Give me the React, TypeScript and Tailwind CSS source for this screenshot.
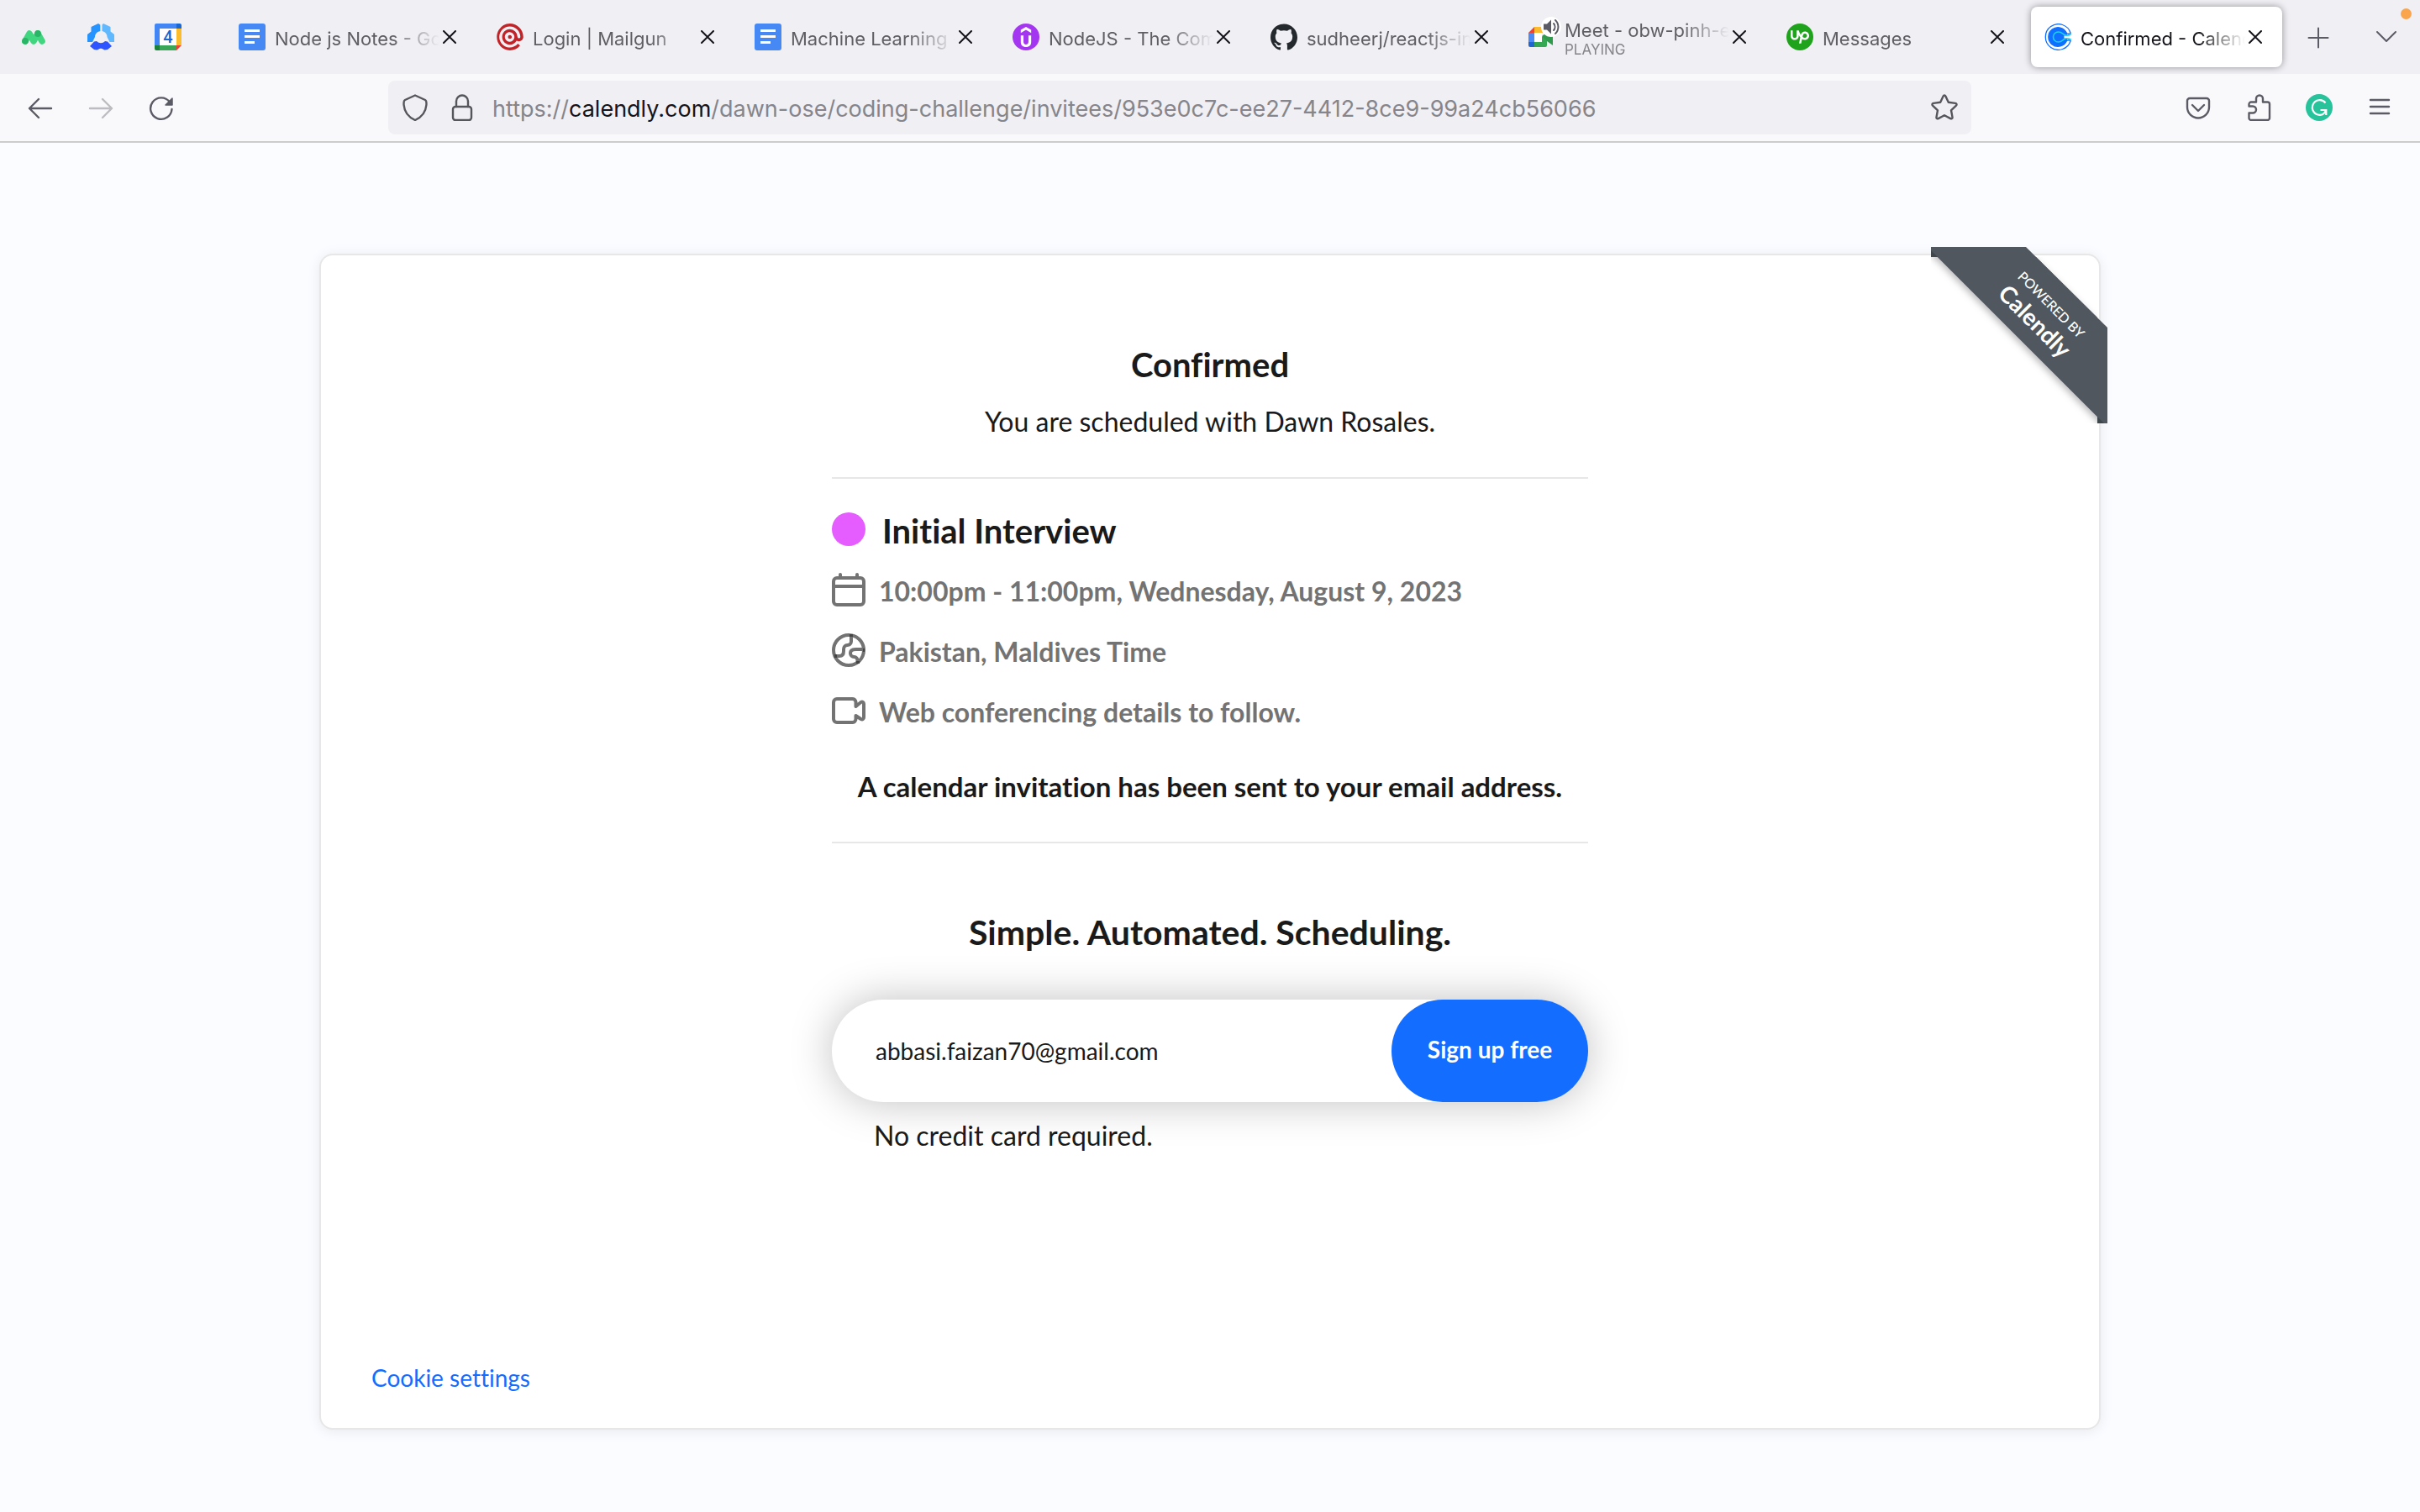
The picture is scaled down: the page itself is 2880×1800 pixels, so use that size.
import type { ReactNode } from "react";
import { SiGithub, SiMailgun, SiUdemy, SiUpwork } from "react-icons/si";

/* ---------- favicons ---------- */

function MonitorIcon() {
  return (
    <svg viewBox="0 0 28 17" className="w-7" aria-hidden="true">
      <path d="M4 13 9 4 14 13 19 4 24 13" fill="none" stroke="#3fd67f" strokeWidth="7.6" strokeLinecap="round" strokeLinejoin="round" />
      <circle cx="4" cy="12.8" r="3.9" fill="#29b566" />
      <circle cx="19" cy="4" r="3.9" fill="#29b566" />
    </svg>
  );
}

function HubIcon() {
  return (
    <svg viewBox="0 0 32 32" className="size-8" aria-hidden="true">
      <path d="M13 0 15.300 1.500V9C11 10 9 13 9 16l-3 6H0v-9l4.500-3.500V4z" fill="#2694ff" />
      <path d="M19 0 17.500 1.500V9c4 1 6 4 6 7l3 6H32v-9l-4.500-3.500V4z" fill="#60b9ff" />
      <path d="M3 27 8 21.500l3-.5c3 3 7 3 10 0l3 .5 5 5.500-5 4-3.500.5L17 29.800h-2L11.500 31.500 8 31z" fill="#2d54ff" />
    </svg>
  );
}

function GoogleCalendarIcon() {
  return (
    <span className="relative block size-8">
      <svg viewBox="0 0 32 32" className="size-8" aria-hidden="true">
        <path d="M2 0h24v6H6v20H0V2a2 2 0 0 1 2-2z" fill="#4285f4" />
        <path d="M26 0h4a2 2 0 0 1 2 2v4h-6z" fill="#1967d2" />
        <path d="M26 6h6v20h-6z" fill="#fbbc2c" />
        <path d="M6 26h20v6H6z" fill="#3aa757" />
        <path d="M0 26h6v6H2a2 2 0 0 1-2-2z" fill="#1a8039" />
        <path d="M26 26h6l-6 6z" fill="#ea4335" />
        <path d="M6 6h20v20H6z" fill="#fff" />
      </svg>
      <span className="absolute inset-0 flex items-center justify-center font-['Roboto',sans-serif] text-[20px] leading-none font-medium text-[#1967d2]">4</span>
    </span>
  );
}

function DocsIcon() {
  return (
    <svg viewBox="0 0 32 32" className="size-8" aria-hidden="true">
      <rect width="32" height="32" rx="3" fill="#4688f4" />
      <path d="M7 7h18v3H7zM7 14h18v3H7zM7 21h12v3H7z" fill="#fff" />
    </svg>
  );
}

function UdemyIcon() {
  return (
    <span className="flex size-8 items-center justify-center rounded-full bg-[#a435f0] text-white">
      <SiUdemy className="size-6" aria-hidden="true" />
    </span>
  );
}

function UpworkIcon() {
  return (
    <span className="flex size-8 items-center justify-center rounded-full bg-[#1fa31c] text-white">
      <SiUpwork className="size-[22px]" aria-hidden="true" />
    </span>
  );
}

function MeetIcon() {
  return (
    <svg viewBox="0 0 32 32" className="size-8 overflow-visible" aria-hidden="true">
      <path d="M0 11 7 4v7z" fill="#ea4335" />
      <path d="M7 4h13a2 2 0 0 1 2 2v5H7z" fill="#fbb92e" />
      <path d="M0 11h7v11H0z" fill="#4c8bf5" />
      <path d="M0 22h7v6H2a2 2 0 0 1-2-2z" fill="#1f66d0" />
      <path d="M7 22h9V16l6-6v16a2 2 0 0 1-2 2H7z" fill="#34a853" />
      <path d="m16 15 7-5 6-4v20l-7-5z" fill="#2f9a4b" />
      <path d="M7 11h9v11H7z" fill="#fff" />
      <circle cx="27" cy="4" r="12" fill="#fff" />
      <path d="M18 0.500h4l5-5v17l-5-5h-4z" fill="#5b5b66" />
      <path d="M30 0a6 6 0 0 1 0 8M32-4a11 11 0 0 1 0 16" fill="none" stroke="#5b5b66" strokeWidth="2" strokeLinecap="round" />
    </svg>
  );
}

function CalendlyIcon() {
  return (
    <svg viewBox="0 0 32 32" className="size-8" aria-hidden="true">
      <path d="M31.200 11.500A15.300 15.300 0 1 0 31.200 20.500C29.800 19.600 28 19.500 26.500 20.500A11.300 11.300 0 1 1 26.500 11.500C28 12.500 29.800 12.400 31.200 11.500z" fill="#fff" stroke="#0f6fff" strokeWidth="1.300" strokeLinejoin="round" />
      <circle cx="16.300" cy="16" r="11.300" fill="#0f6fff" />
      <path d="M23.500 14.500 28 14v4l-4.500-.5z" fill="#fff" />
      <path d="M31.200 13c-2.500 1.500-6.200 1.300-8.200 0C21 11.500 20 10 16.500 10a6 6 0 0 0 0 12c3.500 0 4.500-1.500 6.500-3s5.700-1.500 8.200 0" fill="none" stroke="#1fd0f0" strokeWidth="1.600" strokeLinecap="round" />
    </svg>
  );
}

/* ---------- line icons ---------- */

function Stroke({ children, className, width = 2.4 }: { children: ReactNode; className: string; width?: number }) {
  return (
    <svg viewBox="0 0 32 32" className={className} fill="none" stroke="currentColor" strokeWidth={width} strokeLinecap="round" strokeLinejoin="round" aria-hidden="true">
      {children}
    </svg>
  );
}

type Tab = { title: string; icon: ReactNode; note?: string; active?: boolean };

const tabs: Tab[] = [
  { title: "Node js Notes - Go", icon: <DocsIcon /> },
  { title: "Login | Mailgun", icon: <SiMailgun className="size-8 text-[#c02428]" aria-hidden="true" /> },
  { title: "Machine Learning -", icon: <DocsIcon /> },
  { title: "NodeJS - The Com", icon: <UdemyIcon /> },
  { title: "sudheerj/reactjs-in", icon: <SiGithub className="size-8 text-[#24292e]" aria-hidden="true" /> },
  { title: "Meet - obw-pinh-e", icon: <MeetIcon />, note: "PLAYING" },
  { title: "Messages", icon: <UpworkIcon /> },
  { title: "Confirmed - Calend", icon: <CalendlyIcon />, active: true },
];

function BrowserTab({ tab }: { tab: Tab }) {
  return (
    <div className="w-[307px] min-w-0 px-1 py-2">
      <div
        className={
          tab.active
            ? "flex h-[72px] items-center rounded-lg bg-white pr-6 pl-4 text-[#15141a] shadow-[0_0_8px_rgba(0,0,0,0.4)]"
            : "flex h-[72px] items-center pr-6 pl-4 text-[#5f5f63]"
        }
      >
        <button type="button" className="flex min-w-0 flex-1 items-center gap-[11px] text-left">
          <span className="shrink-0">{tab.icon}</span>
          <span className="flex min-w-0 flex-1 flex-col overflow-hidden pt-1 whitespace-nowrap [mask-image:linear-gradient(to_left,transparent,black_56px)]">
            <span className="text-[22px] leading-[26px]">{tab.title}</span>
            {tab.note && <span className="text-[17px] leading-5 text-[#85858a]">{tab.note}</span>}
          </span>
        </button>
        <button type="button" aria-label={`Close ${tab.title}`} className="ml-1 shrink-0 text-[#15141a]">
          <svg viewBox="0 0 16 16" className="size-4" fill="none" stroke="currentColor" strokeWidth="2" strokeLinecap="round" aria-hidden="true">
            <path d="m1 1 14 14M15 1 1 15" />
          </svg>
        </button>
      </div>
    </div>
  );
}

function TabStrip() {
  return (
    <div className="relative flex bg-[#f0eff4]">
      <div className="mr-6 flex">
        <button type="button" aria-label="Monitor" className="flex w-20 items-center justify-center">
          <MonitorIcon />
        </button>
        <button type="button" aria-label="Hub" className="flex w-20 items-center justify-center">
          <HubIcon />
        </button>
        <button type="button" aria-label="Google Calendar" className="flex w-20 items-center justify-center">
          <GoogleCalendarIcon />
        </button>
      </div>
      {tabs.map((tab) => (
        <BrowserTab key={tab.title} tab={tab} />
      ))}
      <button type="button" aria-label="New tab" className="flex w-[78px] items-center justify-center text-[#5b5b66]">
        <Stroke className="size-8" width={2}>
          <path d="M16 5.500v23M4.500 17h23" />
        </Stroke>
      </button>
      <button type="button" aria-label="List all tabs" className="ml-auto flex w-20 items-center justify-center text-[#5b5b66]">
        <Stroke className="size-8" width={2}>
          <path d="m5 10 11 11 11-11" />
        </Stroke>
      </button>
      <span className="absolute top-[10px] right-[10px] size-[13px] rounded-full bg-[#faa54b]" />
    </div>
  );
}

function NavButton({ label, muted, children }: { label: string; muted?: boolean; children: ReactNode }) {
  return (
    <button
      type="button"
      aria-label={label}
      className={muted ? "flex h-20 w-[72px] items-center justify-center text-[#bdbdc1]" : "flex h-20 w-[72px] items-center justify-center text-[#5b5b66]"}
    >
      {children}
    </button>
  );
}

function NavBar() {
  return (
    <div className="flex items-center border-b-2 border-[#cccccc] bg-[#f9f9fb] px-3">
      <NavButton label="Back">
        <Stroke className="size-8">
          <path d="M14 6 3 17l11 11M3 17h26" />
        </Stroke>
      </NavButton>
      <NavButton label="Forward" muted>
        <Stroke className="size-8">
          <path d="m18 6 11 11-11 11M29 17H3" />
        </Stroke>
      </NavButton>
      <NavButton label="Reload">
        <Stroke className="size-8">
          <path d="M28.500 18A12.700 12.700 0 1 1 26 9.500" />
          <path d="M29 5v8h-8z" fill="currentColor" strokeWidth="1.500" />
        </Stroke>
      </NavButton>

      <div className="mx-[234px] flex h-16 min-w-0 flex-1 items-center rounded-lg bg-[#f0eff4] px-4 text-[#55555c]">
        <button type="button" aria-label="Tracking protection">
          <Stroke className="size-8">
            <path d="M16 1.500 28 7c1.500.7 1.600 3.500 1.400 6-.6 7-4.400 14-13.400 18C7 27 3.200 20 2.600 13 2.400 10.500 2.500 7.700 4 7z" />
          </Stroke>
        </button>
        <button type="button" aria-label="Connection secure" className="ml-6">
          <Stroke className="size-8">
            <rect x="5" y="15" width="22" height="16" rx="3" />
            <path d="M9 15V8.500a7 7 0 0 1 14 0V15" />
          </Stroke>
        </button>
        <div role="textbox" aria-label="Address" className="ml-5 min-w-0 flex-1 overflow-hidden pt-1 text-[27px] leading-9 whitespace-nowrap text-[#85858b]">
          https://<span className="text-[#15141a]">calendly.com</span>/dawn-ose/coding-challenge/invitees/953e0c7c-ee27-4412-8ce9-99a24cb56066
        </div>
        <button type="button" aria-label="Bookmark this page">
          <Stroke className="size-8">
            <path d="M14.600 2.500c.6-1.300 2.200-1.300 2.800 0l3.400 7.300 8.200 1.100c1.500.2 2 1.800 1 2.800l-6 5.600 1.500 8.100c.3 1.500-1 2.400-2.300 1.700L16 25.300l-7.200 3.800c-1.300.7-2.600-.2-2.300-1.700L8 19.300l-6-5.600c-1-1-.5-2.600 1-2.800l8.200-1.100z" />
          </Stroke>
        </button>
      </div>

      <NavButton label="Save to Pocket">
        <Stroke className="size-8">
          <path d="M6 5h20a3 3 0 0 1 3 3v7.500a13 13 0 0 1-26 0V8a3 3 0 0 1 3-3zM9 13l7 7 7-7" />
        </Stroke>
      </NavButton>
      <NavButton label="Extensions">
        <Stroke className="size-8">
          <path d="M13 9.500V5.500a4 4 0 0 1 8 0v4h5.500a2.500 2.500 0 0 1 2.500 2.500v16.500a2.500 2.500 0 0 1-2.500 2.500h-19.500A2.500 2.500 0 0 1 4.500 28.500v-6h4.500a4 4 0 0 0 0-8H4.500V12A2.500 2.500 0 0 1 7 9.500z" />
        </Stroke>
      </NavButton>
      <NavButton label="Grammarly">
        <svg viewBox="0 0 32 32" className="size-8" aria-hidden="true">
          <circle cx="16" cy="16" r="16" fill="#27c39b" />
          <path d="M23.500 10.500A8.800 8.800 0 1 0 17 24.800c3.500 0 6-2.500 7-5.800M17.500 19h6.800v6" fill="none" stroke="#fff" strokeWidth="2.200" />
        </svg>
      </NavButton>
      <NavButton label="Open menu">
        <Stroke className="size-8">
          <path d="M5 7h22M5 15h22M5 23h22" />
        </Stroke>
      </NavButton>
    </div>
  );
}

/* ---------- page ---------- */

function PoweredByRibbon() {
  return (
    <a href="#calendly" className="absolute -top-[10px] -right-[10px] block size-[210px] overflow-hidden text-white">
      <svg viewBox="0 0 210 210" className="size-full" aria-hidden="true">
        <defs>
          <filter id="ribbon-shadow" x="-10%" y="-10%" width="120%" height="120%">
            <feDropShadow dx="-1" dy="4" stdDeviation="4" floodColor="#000" floodOpacity="0.28" />
          </filter>
          <clipPath id="ribbon-inside">
            <path d="M0 12h198v198H0z" />
          </clipPath>
        </defs>
        <g clipPath="url(#ribbon-inside)">
          <path d="M0 4 0 0h113l97 96v114h-4z" fill="#50575e" filter="url(#ribbon-shadow)" />
        </g>
        <path d="M0 2v10h10zM198 198v12h10z" fill="#3f464c" />
        <path d="M0 0h113l97 96v114h-4L0 4z" fill="#50575e" />
      </svg>
      <span className="absolute top-[80px] left-[132px] flex -translate-x-1/2 -translate-y-1/2 rotate-45 flex-col items-center whitespace-nowrap">
        <span className="text-[16px] leading-[22px] font-medium">POWERED BY</span>
        <span className="text-[28px] leading-8 font-bold">Calendly</span>
      </span>
    </a>
  );
}

function Detail({ icon, children }: { icon: ReactNode; children: ReactNode }) {
  return (
    <li className="flex h-10 items-center gap-4">
      {icon}
      <span className="pt-1">{children}</span>
    </li>
  );
}

function DetailIcon({ children }: { children: ReactNode }) {
  return (
    <svg viewBox="0 0 40 40" className="size-10 shrink-0" fill="none" stroke="#737373" strokeWidth="4" strokeLinecap="round" strokeLinejoin="round" aria-hidden="true">
      {children}
    </svg>
  );
}

function Confirmation() {
  return (
    <main className="flex flex-1 flex-col bg-[#fbfcff] px-10 pt-[132px] pb-[98px]">
      <div className="relative mx-auto flex w-full max-w-[2120px] flex-1 flex-col rounded-2xl border-2 border-[#e7e7e7] bg-white pt-[106px] pb-[42px] font-['Lato',sans-serif] text-[#1a1a1a] shadow-[0_2px_16px_rgba(0,0,0,0.08)] [font-variant-ligatures:none]">
        <PoweredByRibbon />
        <div className="mx-auto flex w-full max-w-[900px] flex-col">
          <h1 className="text-center text-[40px] leading-[48px] font-bold">Confirmed</h1>
          <p className="mt-6 text-center text-[32px] leading-10">You are scheduled with Dawn Rosales.</p>
          <hr className="mt-[46px] border-t-2 border-[#e7e7e7]" />

          <div className="mt-9 flex h-12 items-center gap-5">
            <span className="size-10 rounded-full bg-[#e55cff]" />
            <h2 className="pt-1 text-[40px] leading-[48px] font-bold">Initial Interview</h2>
          </div>
          <ul className="mt-7 flex flex-col gap-8 text-[32px] leading-10 font-bold text-[#737373]">
            <Detail
              icon={
                <DetailIcon>
                  <rect x="2" y="6" width="36" height="32" rx="4" />
                  <path d="M2 16h36M10 2v4M30 2v4" />
                </DetailIcon>
              }
            >
              10:00pm - 11:00pm, Wednesday, August 9, 2023
            </Detail>
            <Detail
              icon={
                <DetailIcon>
                  <circle cx="20" cy="20" r="18" />
                  <path d="M23 3v6.500c0 3-2 4.500-4.500 4.500S14 16 14 19v2c0 4-2 6-5 6H4M38 19h-9c-5 0-7 1.500-7 4.500s2 4.500 4.500 4.500 4 2 4 4v3" strokeLinecap="butt" />
                  <path d="M23 1v3M3 27h3M37 20h2M31 33v3" stroke="#444" strokeLinecap="butt" />
                </DetailIcon>
              }
            >
              Pakistan, Maldives Time
            </Detail>
            <Detail
              icon={
                <DetailIcon>
                  <path d="M28.500 12V10a4 4 0 0 0-4-4H6a4 4 0 0 0-4 4v20a4 4 0 0 0 4 4h18.500a4 4 0 0 0 4-4v-4l6 4c2 1 3.500 0 3.500-2V12c0-2-1.500-3-3.500-2l-6 5z" />
                </DetailIcon>
              }
            >
              Web conferencing details to follow.
            </Detail>
          </ul>
          <p className="mt-[50px] text-center text-[33px] leading-10 font-bold">A calendar invitation has been sent to your email address.</p>
          <hr className="mt-[46px] border-t-2 border-[#e7e7e7]" />

          <h2 className="mt-[82px] text-center text-[41px] leading-[48px] font-bold">Simple. Automated. Scheduling.</h2>
          <form className="mt-14 flex h-[122px] rounded-full bg-white shadow-[0_0_50px_rgba(0,0,0,0.25)]" onSubmit={(e) => e.preventDefault()}>
            <input
              type="email"
              aria-label="Email address"
              defaultValue="abbasi.faizan70@gmail.com"
              className="min-w-0 flex-1 rounded-l-full bg-transparent pl-[52px] text-[28px] outline-none"
            />
            <button type="submit" className="w-[234px] rounded-full bg-[#136dff] pb-1 text-[28px] font-bold text-white">
              Sign up free
            </button>
          </form>
          <p className="mt-5 pl-[50px] text-[32px] leading-10">No credit card required.</p>
        </div>
        <a href="#cookies" className="mt-auto ml-[60px] self-start text-[28px] leading-9 text-[#136dff]">
          Cookie settings
        </a>
      </div>
    </main>
  );
}

export default function App() {
  return (
    <div className="flex min-h-screen flex-col font-['Inter',sans-serif]">
      <header>
        <TabStrip />
        <NavBar />
      </header>
      <Confirmation />
    </div>
  );
}
